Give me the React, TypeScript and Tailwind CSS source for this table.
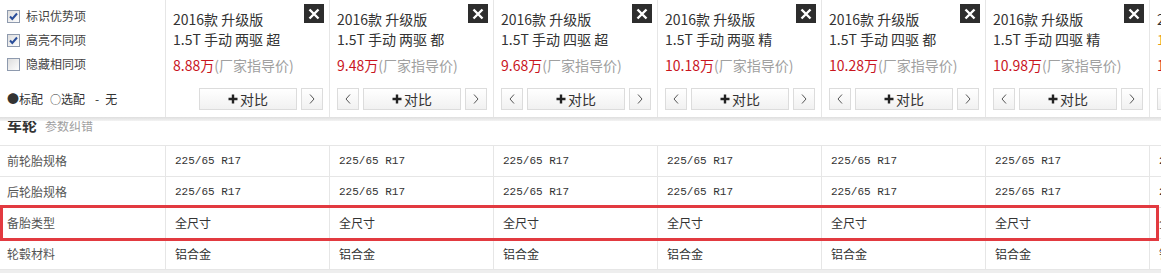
import React from "react";

type Car = {
  title: string;
  sub: string;
  price: string;
  first?: boolean;
  hover?: boolean;
};

const cars: Car[] = [
  { title: "2016款 升级版", sub: "1.5T 手动 两驱 超", price: "8.88万", first: true },
  { title: "2016款 升级版", sub: "1.5T 手动 两驱 都", price: "9.48万" },
  { title: "2016款 升级版", sub: "1.5T 手动 四驱 超", price: "9.68万" },
  { title: "2016款 升级版", sub: "1.5T 手动 两驱 精", price: "10.18万" },
  { title: "2016款 升级版", sub: "1.5T 手动 四驱 都", price: "10.28万" },
  { title: "2016款 升级版", sub: "1.5T 手动 四驱 精", price: "10.98万" },
  { title: "2016款 升级版", sub: "1.5T 手动 四驱 旗", price: "11.48万", hover: true },
];

const rows = [
  { label: "前轮胎规格", value: "225/65 R17", mono: true },
  { label: "后轮胎规格", value: "225/65 R17", mono: true },
  { label: "备胎类型", value: "全尺寸" },
  { label: "轮毂材料", value: "铝合金" },
];

const cjk = "font-['Microsoft_YaHei','Noto_Sans_CJK_SC',sans-serif]";

function CheckBox({ checked }: { checked?: boolean }) {
  return (
    <svg width="13" height="13" viewBox="0 0 13 13" className="shrink-0">
      <defs>
        <linearGradient id="cb" x1="0" y1="0" x2="1" y2="1">
          <stop offset="0" stopColor="#dcdcdc" />
          <stop offset="1" stopColor="#ffffff" />
        </linearGradient>
      </defs>
      <rect x="0.5" y="0.5" width="12" height="12" fill="url(#cb)" stroke="#8e9aae" />
      {checked && (
        <polyline
          points="3,6.5 5.3,9 10,3.5"
          fill="none"
          stroke="#2a4e9a"
          strokeWidth="2"
        />
      )}
    </svg>
  );
}

function Chevron({ dir }: { dir: "left" | "right" }) {
  return (
    <svg width="6" height="10" viewBox="0 0 6 10">
      <polyline
        points={dir === "left" ? "5,0.5 1,5 5,9.5" : "1,0.5 5,5 1,9.5"}
        fill="none"
        stroke="#555"
        strokeWidth="1"
      />
    </svg>
  );
}

function CloseBox() {
  return (
    <div className="flex h-[19px] w-[20px] items-center justify-center bg-[#2d2d2d]">
      <svg width="12" height="12" viewBox="0 0 12 12">
        <path d="M1.5 1.5 L10.5 10.5 M10.5 1.5 L1.5 10.5" stroke="#fff" strokeWidth="2.4" />
      </svg>
    </div>
  );
}

const btn =
  "flex h-[22px] items-center justify-center border border-[#dcdcdc] bg-gradient-to-b from-white to-[#f1f1f1]";

function CarHeader({ car }: { car: Car }) {
  return (
    <div className="flex h-[117px] w-[164px] shrink-0 flex-col border-r border-[#e6e6e6] pl-[7px] pr-[5px]">
      <div className="flex justify-between pt-[4px]">
        <div className="pt-[5px] text-[14px] leading-[20px] text-[#333]">
          <div className="whitespace-nowrap">{car.title}</div>
          <div className={car.hover ? "whitespace-nowrap text-[#e89a1a]" : "whitespace-nowrap"}>
            {car.sub}
          </div>
        </div>
        <CloseBox />
      </div>
      <div className="mt-[6px] whitespace-nowrap text-[14px] leading-[20px]">
        <span className="text-[#c9151e]">{car.price}</span>
        <span className="text-[#a0a0a0]">(厂家指导价)</span>
      </div>
      <div className="mt-[13px] flex gap-[4px]">
        <div className={car.first ? "w-[22px]" : `${btn} w-[22px]`}>
          {!car.first && <Chevron dir="left" />}
        </div>
        <div className={`${btn} w-[98px] gap-[2px] text-[14px] text-[#333]`}>
          <svg width="10" height="10" viewBox="0 0 10 10">
            <path d="M5 0.5 V9.5 M0.5 5 H9.5" stroke="#222" strokeWidth="2.4" />
          </svg>
          <span>对比</span>
        </div>
        <div className={`${btn} w-[22px]`}>
          <Chevron dir="right" />
        </div>
      </div>
    </div>
  );
}

export default function App() {
  return (
    <div className={`relative h-[278px] w-[1161px] overflow-hidden bg-white ${cjk}`}>
      <div className="w-[1320px]">
        <div className="flex">
          <div className="h-[117px] w-[166px] shrink-0 border-r border-[#e6e6e6] pt-[4px] pl-[7px] text-[12px] text-[#444]">
            {[
              { text: "标识优势项", checked: true },
              { text: "高亮不同项", checked: true },
              { text: "隐藏相同项", checked: false },
            ].map((item) => (
              <div key={item.text} className="flex h-[24px] items-center gap-[6px]">
                <CheckBox checked={item.checked} />
                <span>{item.text}</span>
              </div>
            ))}
            <div className="mt-[13px] flex h-[20px] items-center text-[#333]">
              <span className="text-[12px]">●</span>
              <span>标配</span>
              <span className="ml-[7px] text-[11px]">○</span>
              <span>选配</span>
              <span className="ml-[10px]">-</span>
              <span className="ml-[6px]">无</span>
            </div>
          </div>
          {cars.map((car, i) => (
            <CarHeader key={i} car={car} />
          ))}
        </div>

        <div className="h-[4px] bg-gradient-to-b from-[#dedede] to-[#f3f3f3]" />

        {/* header sits over the section title, so its top is cut */}
        <div className="flex h-[25px] items-start overflow-hidden border-b border-[#e6e6e6] pl-[7px]">
          <div className="-mt-[6px] flex items-baseline leading-[20px]">
            <span className="text-[15px] font-bold text-[#333]">车轮</span>
            <span className="ml-[8px] text-[12px] text-[#a0a0a0]">参数纠错</span>
          </div>
        </div>

        {rows.map((row) => (
          <div key={row.label} className="flex h-[31px] border-b border-[#e6e6e6]">
            <div className="flex w-[166px] shrink-0 items-center border-r border-[#e6e6e6] pl-[7px] text-[12px] text-[#555]">
              {row.label}
            </div>
            {cars.map((_, i) => (
              <div
                key={i}
                className={
                  row.mono
                    ? "flex w-[164px] shrink-0 items-center border-r border-[#e6e6e6] pl-[9px] font-['Liberation_Mono',monospace] text-[11px] text-[#333]"
                    : "flex w-[164px] shrink-0 items-center border-r border-[#e6e6e6] pl-[9px] text-[12px] text-[#333]"
                }
              >
                {row.value}
              </div>
            ))}
          </div>
        ))}
        <div className="h-[3px] bg-[#eeeeee]" />
      </div>

      <div className="absolute left-0 top-[205px] h-[36px] w-[1159px] border-[3px] border-[#e23a40]" />
    </div>
  );
}
